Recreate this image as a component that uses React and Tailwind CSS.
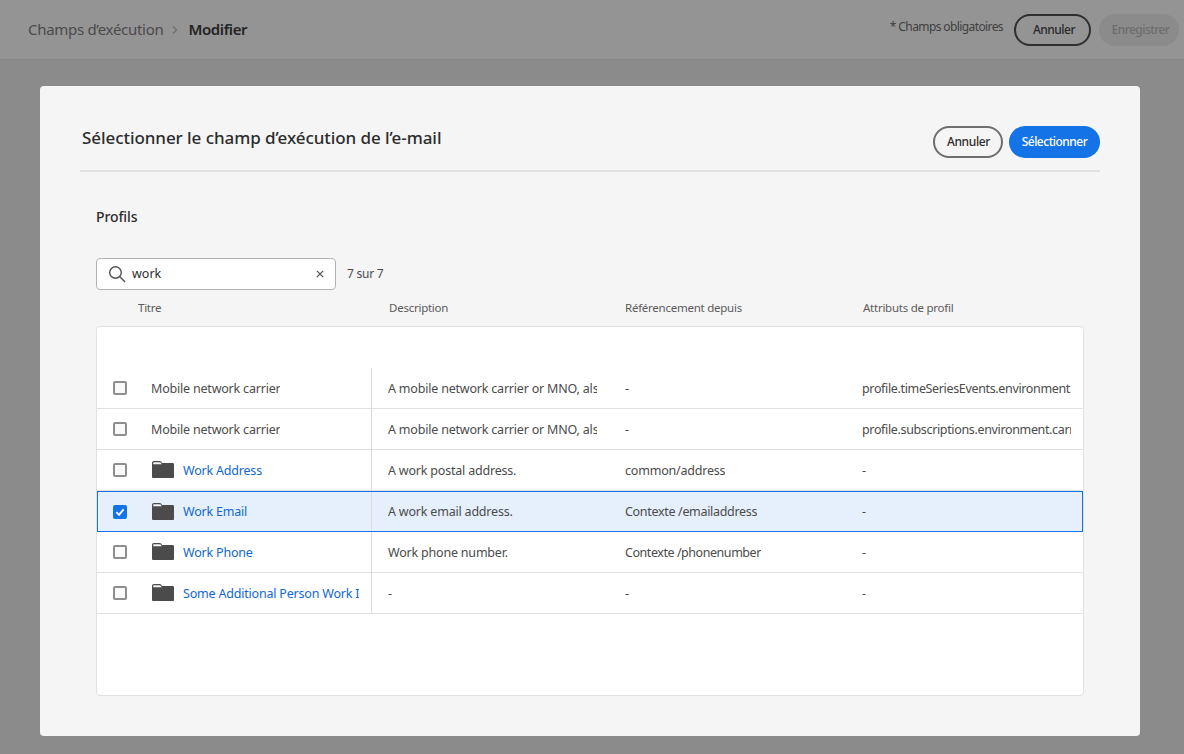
import React from "react";

const Folder = () => (
  <svg width="22" height="17" viewBox="0 0 22 18" preserveAspectRatio="none" className="shrink-0">
    <path d="M0 2.2C0 1 .8 0 2 0h5.6c.8 0 1.3.3 1.8.9L10 2h10.6c.8 0 1.4.6 1.4 1.4V17c0 .6-.4 1-1 1H1c-.6 0-1-.4-1-1z" fill="#4b4b4b" />
    <path d="M1.2 3.4V2.2c0-.6.3-1 .9-1h5.4c.5 0 .8.2 1.1.5l1.2 1.7z" fill="#f4f4f4" />
  </svg>
);

const Check = ({ checked }) =>
  checked ? (
    <span className="w-[14px] h-[14px] rounded-[2px] bg-[#1473e6] flex items-center justify-center shrink-0">
      <svg width="10" height="10" viewBox="0 0 10 10"><path d="M1.4 5.2 4 7.8 8.6 2.4" fill="none" stroke="#fff" strokeWidth="1.9" /></svg>
    </span>
  ) : (
    <span className="w-[14px] h-[14px] rounded-[2px] border-2 border-[#8e8e8e] bg-[#fafafa] shrink-0" />
  );

const rows = [
  { t: "Mobile network carrier", d: "A mobile network carrier or MNO, also known as a wireless", r: "-", a: "profile.timeSeriesEvents.environment.carrier" },
  { t: "Mobile network carrier", d: "A mobile network carrier or MNO, also known as a wireless", r: "-", a: "profile.subscriptions.environment.carrier" },
  { t: "Work Address", d: "A work postal address.", r: "common/address", a: "-", f: true },
  { t: "Work Email", d: "A work email address.", r: "Contexte /emailaddress", a: "-", f: true, s: true, rc: "tracking-[-0.32px]" },
  { t: "Work Phone", d: "Work phone number.", r: "Contexte /phonenumber", a: "-", f: true, rc: "tracking-[-0.45px]" },
  { t: "Some Additional Person Work Information", d: "-", r: "-", a: "-", f: true },
];

const cols = "grid grid-cols-[275px_237px_237px_237px]";

export default function App() {
  return (
    <div className="w-[1184px] h-[754px] overflow-hidden bg-[#8b8b8b] flex flex-col font-['Noto_Sans','Open_Sans',sans-serif] text-[12px] text-[#3a3a3a]">
      <header className="h-[60px] shrink-0 bg-[#949494] border-b border-[#858585] flex items-center pl-[28px] pr-[5px]">
        <span className="text-[15px] text-[#4a4a4a] tracking-[-0.3px]">Champs d’exécution</span>
        <svg width="8" height="10" viewBox="0 0 8 10" className="ml-[8px] mr-[9px]"><path d="M2 1.5 5.5 5 2 8.5" fill="none" stroke="#6e6e6e" strokeWidth="1.2" /></svg>
        <span className="text-[15px] font-semibold text-[#232323] tracking-[-0.4px]">Modifier</span>
        <span className="ml-auto text-[#3f3f3f] text-[12px] tracking-[-0.6px] -mt-[6px]">* Champs obligatoires</span>
        <button className="ml-[11px] w-[77px] h-[32px] pl-[3px] rounded-full border-2 border-[#2f2f2f] text-[#2a2a2a] font-medium text-[12px] tracking-[-0.5px]">Annuler</button>
        <button className="ml-[8px] w-[80px] h-[32px] pl-[3px] rounded-full bg-[#8b8b8b] text-[#6d6d6d] font-medium text-[12px] tracking-[-0.55px]">Enregistrer</button>
      </header>
      <main className="flex-1 px-[40px] pt-[26px]">
        <section className="w-[1100px] h-[650px] bg-[#f5f5f5] rounded-[4px] px-[40px] flex flex-col">
          <div className="h-[86px] shrink-0 border-b-2 border-[#e1e1e1] flex items-start justify-between">
            <h1 className="mt-[39px] ml-[2px] text-[17px] leading-[26px] font-medium text-[#2c2c2c] tracking-[-0.07px]">Sélectionner le champ d’exécution de l’e-mail</h1>
            <div className="mt-[40px] flex gap-[6px]">
              <button className="w-[70px] h-[32px] pl-[1px] rounded-full border-2 border-[#6e6e6e] text-[#2c2c2c] font-medium text-[12px] tracking-[-0.35px]">Annuler</button>
              <button className="w-[91px] h-[32px] rounded-full bg-[#1473e6] text-white font-medium text-[12px] tracking-[-0.5px]">Sélectionner</button>
            </div>
          </div>
          <div className="pl-[16px]">
            <h2 className="mt-[35px] h-[20px] leading-[20px] text-[14px] font-medium text-[#2c2c2c] tracking-[-0.1px]">Profils</h2>
            <div className="mt-[31px] flex items-center">
              <div className="w-[240px] h-[32px] rounded-[4px] border border-[#b3b3b3] bg-white flex items-center pl-[11px] pr-[11px]">
                <svg width="18" height="18" viewBox="0 0 18 18" fill="none" stroke="#505050" strokeWidth="1.4"><circle cx="7.5" cy="7.5" r="5.8" /><path d="m11.8 11.8 4.8 4.8" strokeLinecap="round" /></svg>
                <span className="ml-[6px] text-[12.5px] text-[#2c2c2c]">work</span>
                <svg width="8" height="8" viewBox="0 0 8 8" className="ml-auto" stroke="#505050" strokeWidth="1.2"><path d="m.8.8 6.4 6.4M7.2.8.8 7.2" /></svg>
              </div>
              <span className="ml-[11px] text-[12px] text-[#4b4b4b] tracking-[-0.25px]">7 sur 7</span>
            </div>
            <div className="mt-[5px] mb-[5px] h-[26px] flex items-center text-[#5b5b5b] text-[11.5px] tracking-[-0.25px]">
              <span className="w-[42px] shrink-0" />
              <span className="w-[251px] shrink-0">Titre</span>
              <span className="w-[236px] shrink-0">Description</span>
              <span className="w-[238px] shrink-0">Référencement depuis</span>
              <span>Attributs de profil</span>
            </div>
            <div className="w-[988px] h-[370px] bg-white border border-[#e1e1e1] rounded-[4px] pt-[41px] overflow-hidden">
              {rows.map((r, i) => (
                <div key={i} className={`${cols} h-[41px] ${r.s ? "bg-[#e5f0fc] outline outline-1 -outline-offset-1 outline-[#1473e6] relative" : "border-b border-[#e1e1e1]"}`}>
                  <div className="flex items-center pl-[16px] pr-[12px] border-r border-[#dcdcdc] overflow-hidden">
                    <Check checked={r.s} />
                    <span className="flex items-center min-w-0 ml-[24px]">
                      {r.f && <span className="ml-[1px] mr-[9px] -mt-[1px] flex"><Folder /></span>}
                      <span className={`pt-[2px] whitespace-nowrap overflow-hidden max-w-[176px] text-[12.5px] tracking-[-0.2px] ${r.f ? "text-[#1068d0]" : "text-[#4b4b4b]"}`}>{r.t}</span>
                    </span>
                  </div>
                  <div className="flex items-center pl-[16px] pr-[12px] overflow-hidden">
                    <span className="pt-[2px] whitespace-nowrap overflow-hidden text-[12.5px] tracking-[-0.2px] text-[#4b4b4b]">{r.d}</span>
                  </div>
                  <div className="flex items-center pl-[16px] pr-[12px] overflow-hidden">
                    <span className={`pt-[2px] whitespace-nowrap overflow-hidden text-[12.5px] text-[#4b4b4b] ${r.rc || "tracking-[-0.2px]"}`}>{r.r}</span>
                  </div>
                  <div className="flex items-center pl-[16px] pr-[12px] overflow-hidden">
                    <span className="pt-[2px] whitespace-nowrap overflow-hidden text-[12.5px] tracking-[-0.35px] text-[#4b4b4b]">{r.a}</span>
                  </div>
                </div>
              ))}
            </div>
          </div>
        </section>
      </main>
    </div>
  );
}
